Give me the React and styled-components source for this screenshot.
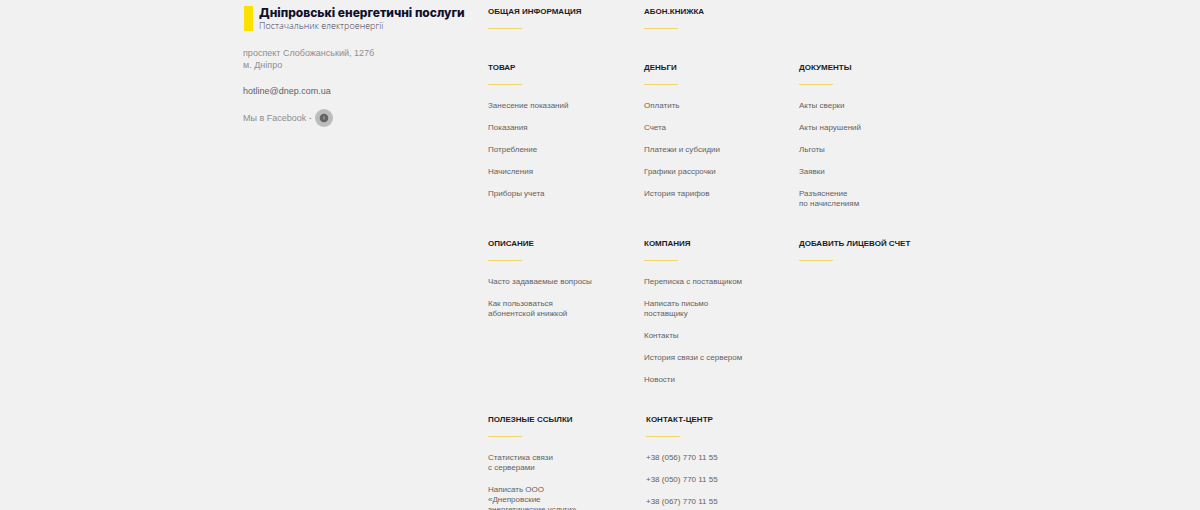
import React from "react";
import styled, { createGlobalStyle } from "styled-components";

const GlobalStyle = createGlobalStyle`
  body {
    margin: 0;
    background: #f1f1f1;
    font-family: "Liberation Sans", Arial, sans-serif;
    color: #626262;
  }
`;

const Footer = styled.footer`
  display: flex;
  box-sizing: border-box;
  max-width: 714px;
  margin: 0 auto;
  padding-top: 6px;
`;

const Brand = styled.address`
  flex: 0 0 245px;
  font-size: 9px;
  font-style: normal;
  line-height: 12px;
  color: #8e8e8e;
`;

const Logo = styled.a`
  display: flex;
  gap: 6px;
  padding-left: 1px;
  text-decoration: none;
  white-space: nowrap;
`;

const LogoMark = styled.span`
  width: 9px;
  height: 25px;
  background: #fce000;
`;

const LogoText = styled.span`
  display: flex;
  flex-direction: column;
`;

const LogoName = styled.strong`
  font-family: Inter, sans-serif;
  font-size: 12px;
  font-weight: 800;
  line-height: 14px;
  color: #10102a;
`;

const LogoSlogan = styled.span`
  font-family: "Open Sans", sans-serif;
  font-size: 9px;
  font-weight: 300;
  line-height: 12px;
  color: #3c3c58;
`;

const Address = styled.p`
  margin: 15px 0 14px;
`;

const Mail = styled.a`
  color: #626262;
  text-decoration: none;
`;

const Social = styled.p`
  display: flex;
  align-items: center;
  gap: 3px;
  margin: 12px 0 0;
`;

const SocialLink = styled.a`
  display: flex;
  align-items: center;
  justify-content: center;
  width: 18px;
  height: 18px;
  border-radius: 50%;
  background: #bcbcbc;
`;

const Nav = styled.nav`
  display: flex;
  flex: 1;
  flex-direction: column;
  gap: 30px;
  padding-top: 1px;
`;

const Row = styled.div`
  display: grid;
  grid-template-columns: 156px 155px 1fr;
  min-height: 26px;
`;

const Group = styled.section`
  padding-left: ${(props) => (props.$inset ? "2px" : "0")};
`;

const Title = styled.h2`
  margin: 0;
  font-size: 8px;
  font-weight: 700;
  line-height: 10px;
  text-transform: uppercase;
  white-space: nowrap;
  color: #1c1c1c;

  &::after {
    content: "";
    display: block;
    width: 34px;
    height: 1px;
    margin-top: 11px;
    background: #f2d46c;
  }
`;

const List = styled.ul`
  display: flex;
  flex-direction: column;
  gap: 12px;
  margin: 16px 0 0;
  padding: 0;
  list-style: none;
`;

const Item = styled.li`
  font-size: 8px;
  line-height: 10px;
  white-space: pre-line;
`;

const ItemLink = styled.a`
  color: inherit;
  text-decoration: none;
`;

const rows = [
  [
    { title: "Общая информация", links: [] },
    { title: "Абон.книжка", links: [] },
  ],
  [
    {
      title: "Товар",
      links: [
        "Занесение показаний",
        "Показания",
        "Потребление",
        "Начисления",
        "Приборы учета",
      ],
    },
    {
      title: "Деньги",
      links: [
        "Оплатить",
        "Счета",
        "Платежи и субсидии",
        "Графики рассрочки",
        "История тарифов",
      ],
    },
    {
      title: "Документы",
      links: [
        "Акты сверки",
        "Акты нарушений",
        "Льготы",
        "Заявки",
        "Разъяснение\nпо начислениям",
      ],
    },
  ],
  [
    {
      title: "Описание",
      links: [
        "Часто задаваемые вопросы",
        "Как пользоваться\nабонентской книжкой",
      ],
    },
    {
      title: "Компания",
      links: [
        "Переписка с поставщиком",
        "Написать письмо\nпоставщику",
        "Контакты",
        "История связи с сервером",
        "Новости",
      ],
    },
    { title: "Добавить лицевой счет", links: [] },
  ],
  [
    {
      title: "Полезные ссылки",
      links: [
        "Статистика связи\nс серверами",
        "Написать ООО\n«Днепровские\nэнергетические услуги»",
      ],
    },
    {
      title: "Контакт-центр",
      inset: true,
      links: ["+38 (056) 770 11 55", "+38 (050) 770 11 55", "+38 (067) 770 11 55"],
    },
  ],
];

const LinkGroup = ({ title, links, inset }) => (
  <Group $inset={inset}>
    <Title>{title}</Title>
    {links.length > 0 && (
      <List>
        {links.map((link) => (
          <Item key={link}>
            <ItemLink href="#">{link}</ItemLink>
          </Item>
        ))}
      </List>
    )}
  </Group>
);

const App = () => (
  <>
    <GlobalStyle />
    <Footer>
      <Brand>
        <Logo href="#">
          <LogoMark />
          <LogoText>
            <LogoName>Дніпровські енергетичні послуги</LogoName>
            <LogoSlogan>Постачальник електроенергії</LogoSlogan>
          </LogoText>
        </Logo>
        <Address>
          проспект Слобожанський, 127б
          <br />
          м. Дніпро
        </Address>
        <Mail href="mailto:hotline@dnep.com.ua">hotline@dnep.com.ua</Mail>
        <Social>
          Мы в Facebook -
          <SocialLink href="#" aria-label="Facebook">
            <svg width="10" height="10" viewBox="0 0 10 10" aria-hidden="true">
              <circle cx="5" cy="5" r="4.3" fill="#636363" />
              <path
                d="M5.6 3.2Q4.9 3.2 4.9 3.8V6.9M4.2 4.8H5.7"
                fill="none"
                stroke="#a8a8a8"
                strokeWidth="0.8"
              />
            </svg>
          </SocialLink>
        </Social>
      </Brand>
      <Nav>
        {rows.map((groups) => (
          <Row key={groups[0].title}>
            {groups.map((group) => (
              <LinkGroup key={group.title} {...group} />
            ))}
          </Row>
        ))}
      </Nav>
    </Footer>
  </>
);

export default App;
